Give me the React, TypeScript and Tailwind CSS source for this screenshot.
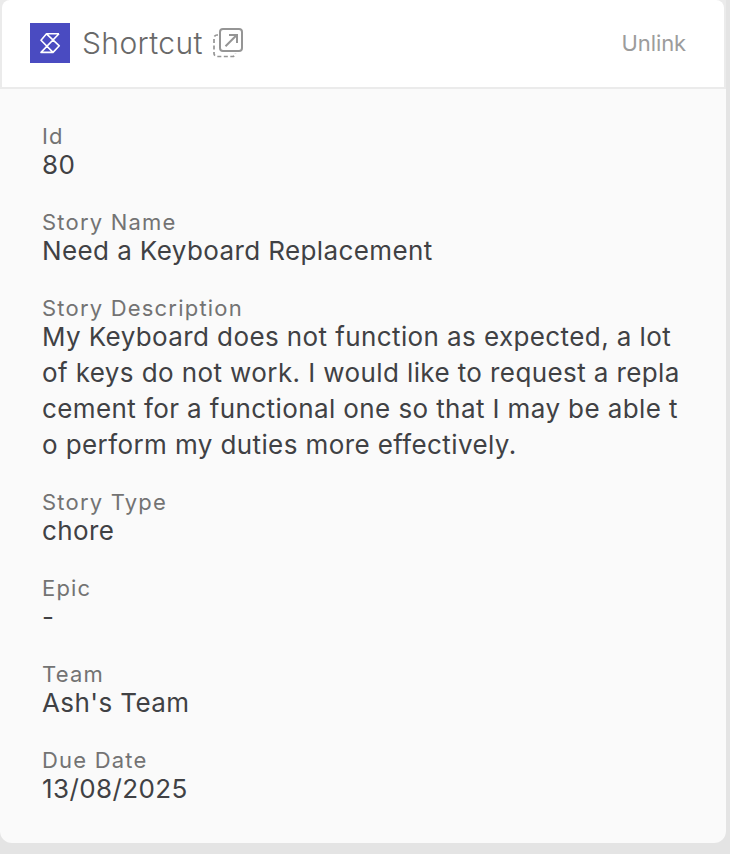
const fields = [
  { label: "Id", value: "80" },
  { label: "Story Name", value: "Need a Keyboard Replacement" },
  {
    label: "Story Description",
    value:
      "My Keyboard does not function as expected, a lot of keys do not work. I would like to request a replacement for a functional one so that I may be able to perform my duties more effectively.",
  },
  { label: "Story Type", value: "chore" },
  { label: "Epic", value: "-" },
  { label: "Team", value: "Ash's Team" },
  { label: "Due Date", value: "13/08/2025" },
];

const ShortcutLogo = () => (
  <div className="size-10 bg-[#4a4bc1]">
    <svg
      width="40"
      height="40"
      viewBox="0 0 40 40"
      fill="none"
      stroke="#fff"
      strokeWidth="1.6"
      strokeLinejoin="round"
    >
      <path d="M29 10.800H16.500L11 17.200l12 12.200 6.300-6.600L16.500 10.800M29 10.800L11 29.400h12" />
    </svg>
  </div>
);

const OpenIcon = () => (
  <svg width="32" height="32" viewBox="0 0 32 32" fill="none" stroke="#959595" strokeWidth="2">
    <rect x="8" y="2" width="22" height="22" rx="3" />
    <path d="M13.5 19.2L24.5 8.2M17 8h8v8" />
    <path
      d="M6 8H5a3 3 0 0 0-3 3v15.500a3 3 0 0 0 3 3h15.500a3 3 0 0 0 3-3"
      strokeWidth="1.7"
      strokeDasharray="4 2.500"
    />
  </svg>
);

const App = () => {
  return (
    <div className="h-[854px] w-[730px] bg-[#e4e4e4] font-[Inter,sans-serif]">
      <div className="flex h-[843px] w-[726px] flex-col overflow-hidden rounded-b-xl bg-[#fafafa]">
        <header className="h-[89px] bg-[#ebebeb] px-0.5 pb-0.5">
          <div className="flex h-full items-center justify-between rounded-t-lg bg-white pr-[38px] pb-px pl-7">
            <div className="flex items-center">
              <ShortcutLogo />
              <h1 className="mr-[9px] ml-3 text-[30px] font-light tracking-[0.4px] text-[#696969]">
                Shortcut
              </h1>
              <OpenIcon />
            </div>
            <button className="text-[22px] tracking-[-0.1px] text-[#9c9c9c]">Unlink</button>
          </div>
        </header>
        <dl className="flex flex-col gap-7 px-[42px] pt-9">
          {fields.map(({ label, value }) => (
            <div key={label}>
              <dt className="text-[22px] leading-[22px] tracking-[1.2px] text-[#737373]">{label}</dt>
              <dd className="text-[26px] leading-9 tracking-[0.4px] break-all text-[#404144]">
                {value}
              </dd>
            </div>
          ))}
        </dl>
      </div>
    </div>
  );
};

export default App;
